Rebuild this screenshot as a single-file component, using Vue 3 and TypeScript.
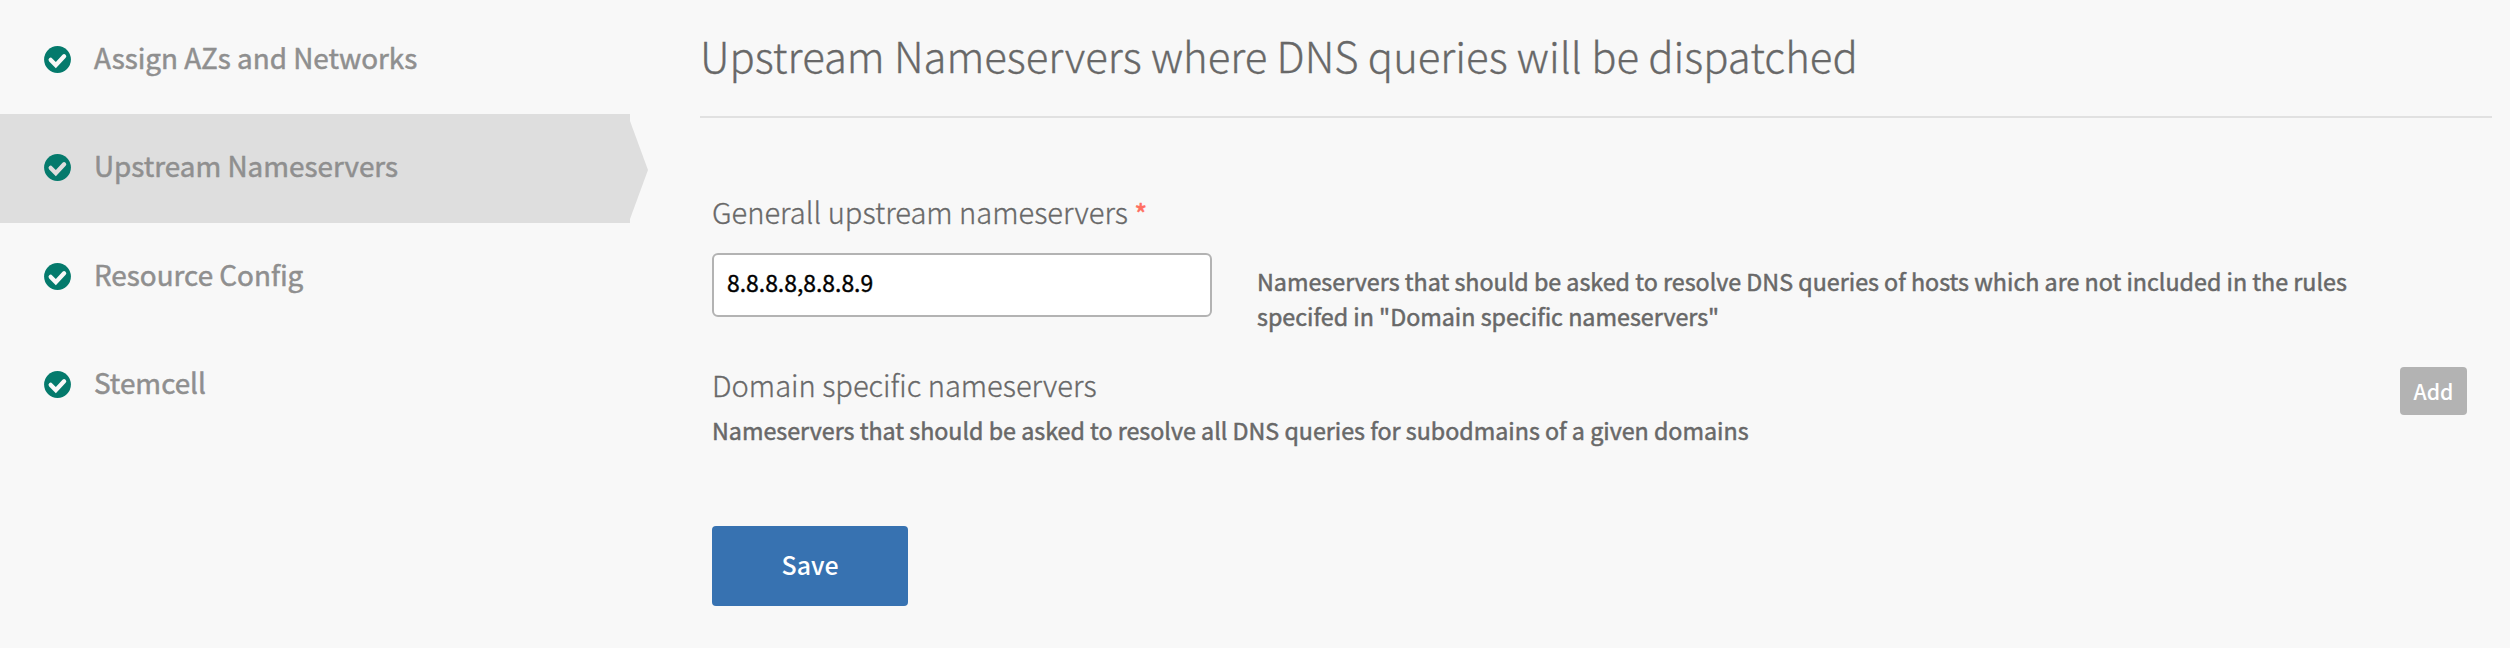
<script setup lang="ts">
import { ref } from 'vue'

interface Step {
  label: string
  active: boolean
}

const steps: Step[] = [
  { label: 'Assign AZs and Networks', active: false },
  { label: 'Upstream Nameservers', active: true },
  { label: 'Resource Config', active: false },
  { label: 'Stemcell', active: false },
]

const nameservers = ref('8.8.8.8,8.8.8.9')
</script>

<template>
  <div class="page">
    <nav class="sidebar">
      <a v-for="step in steps" :key="step.label" class="step" :class="{ active: step.active }">
        <svg class="check" viewBox="0 0 27 27" aria-hidden="true">
          <circle cx="13.5" cy="13.5" r="13.4" fill="#047a6c" />
          <path
            class="tick"
            d="M6.7 13.9 L11.8 19.1 L20.1 10.2"
            fill="none"
            stroke-width="4.3"
            stroke-linecap="round"
            stroke-linejoin="miter"
          />
        </svg>
        <span class="step-label">{{ step.label }}</span>
      </a>
    </nav>

    <main class="content">
      <h1 class="title">Upstream Nameservers where DNS queries will be dispatched</h1>

      <form class="form" @submit.prevent>
        <label class="label" for="ns">Generall upstream nameservers <span class="required">*</span></label>
        <div class="field">
          <input id="ns" v-model="nameservers" class="input" type="text" />
          <p class="help">
            Nameservers that should be asked to resolve DNS queries of hosts which are not included in the rules<br />
            specifed in "Domain specific nameservers"
          </p>
        </div>

        <div class="collection">
          <div>
            <div class="label">Domain specific nameservers</div>
            <p class="note">Nameservers that should be asked to resolve all DNS queries for subodmains of a given domains</p>
          </div>
          <button class="add" type="button">Add</button>
        </div>

        <button class="save" type="submit">Save</button>
      </form>
    </main>
  </div>
</template>

<style>
body {
  background: #f8f8f8;
}
</style>

<style scoped>
.page {
  box-sizing: border-box;
  display: flex;
  width: 2510px;
  height: 648px;
  overflow: hidden;
  background: #f8f8f8;
  color: #686868;
  font-family: "Noto Sans CJK SC", "Noto Sans", sans-serif;
}

.sidebar {
  width: 630px;
  flex: none;
  padding-top: 6px;
}

.step {
  display: flex;
  align-items: flex-start;
  gap: 23px;
  box-sizing: border-box;
  height: 108px;
  padding-left: 44px;
  color: #8f8f8f;
}

.step.active {
  position: relative;
  height: 109px;
  margin-bottom: -0.4px;
  background: #dedede;
}

.step.active::after {
  content: "";
  position: absolute;
  left: 100%;
  top: 7px;
  width: 18px;
  height: 98px;
  background: #dedede;
  clip-path: polygon(0 0, 100% 50%, 0 100%);
}

.check {
  width: 27px;
  height: 27px;
  margin-top: 40px;
}

.tick {
  stroke: #f8f8f8;
}

.active .tick {
  stroke: #dedede;
}

.step-label {
  margin-top: 31px;
  font-size: 27.85px;
  line-height: 40px;
  -webkit-text-stroke: 0.5px currentColor;
}

.content {
  width: 1792px;
  margin-left: 70px;
}

.title {
  box-sizing: border-box;
  height: 118px;
  margin: 0;
  padding-top: 25px;
  border-bottom: 2px solid #e1e1e1;
  font-size: 41.87px;
  font-weight: 300;
  line-height: 60px;
  -webkit-text-stroke: 0.3px currentColor;
}

.form {
  padding: 73px 25px 0 12px;
}

.label {
  display: block;
  font-size: 29.1px;
  font-weight: 300;
  line-height: 40px;
  -webkit-text-stroke: 0.3px currentColor;
}

.required {
  color: #ff6f61;
  font-size: 26px;
  font-weight: 500;
}

.field {
  display: flex;
  gap: 45px;
  margin-top: 20px;
}

.input {
  box-sizing: border-box;
  width: 500px;
  height: 64px;
  padding: 0 12px 6px 13px;
  border: 2px solid #b3b3b3;
  border-radius: 6px;
  background: #fff;
  color: #000;
  font-family: inherit;
  font-size: 22.9px;
  outline: none;
  -webkit-text-stroke: 0.4px currentColor;
}

.help {
  margin: 11px 0 0;
  font-size: 23.28px;
  line-height: 35px;
  -webkit-text-stroke: 0.5px currentColor;
}

.collection {
  display: flex;
  align-items: flex-start;
  justify-content: space-between;
  margin-top: 30px;
}

.note {
  margin: 8px 0 0;
  font-size: 23.26px;
  line-height: 36px;
  -webkit-text-stroke: 0.5px currentColor;
}

.add {
  box-sizing: border-box;
  width: 67px;
  height: 48px;
  margin-top: 3px;
  padding: 0 0 1px;
  border: 0;
  border-radius: 4px;
  background: #b3b3b3;
  color: #fff;
  font-family: inherit;
  font-size: 21.2px;
  font-weight: 500;
}

.save {
  display: block;
  width: 196px;
  height: 80px;
  margin-top: 78px;
  padding: 0 0 5px;
  border: 0;
  border-radius: 4px;
  background: #3772b1;
  color: #fff;
  font-family: inherit;
  font-size: 24.9px;
  font-weight: 500;
}
</style>
